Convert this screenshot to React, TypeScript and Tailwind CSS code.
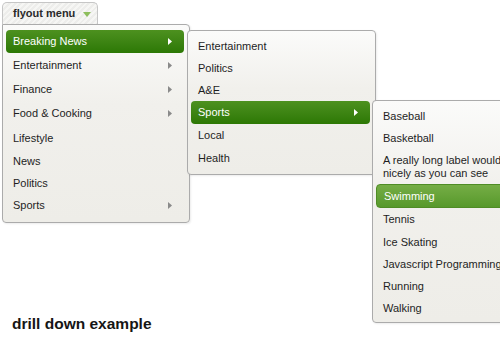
import React from "react";

type Item = {
  label: string;
  h: string;
  arrow?: boolean;
  active?: "dark" | "light";
};

const mainItems: Item[] = [
  { label: "Breaking News", h: "h-[23px]", arrow: true, active: "dark" },
  { label: "Entertainment", h: "h-[24px]", arrow: true },
  { label: "Finance", h: "h-[24px]", arrow: true },
  { label: "Food & Cooking", h: "h-[25px]", arrow: true },
  { label: "Lifestyle", h: "h-[24px]" },
  { label: "News", h: "h-[22px]" },
  { label: "Politics", h: "h-[22px]" },
  { label: "Sports", h: "h-[22px]", arrow: true },
];

const newsItems: Item[] = [
  { label: "Entertainment", h: "h-[22px]" },
  { label: "Politics", h: "h-[22px]" },
  { label: "A&E", h: "h-[22px]" },
  { label: "Sports", h: "h-[23px]", arrow: true, active: "dark" },
  { label: "Local", h: "h-[23px]" },
  { label: "Health", h: "h-[22px]" },
];

const sportsItems: Item[] = [
  { label: "Baseball", h: "h-[22px]" },
  { label: "Basketball", h: "h-[22px]" },
  { label: "A really long label would wrap nicely as you can see", h: "h-[35px]" },
  { label: "Swimming", h: "h-[24px]", active: "light" },
  { label: "Tennis", h: "h-[23px]" },
  { label: "Ice Skating", h: "h-[22px]" },
  { label: "Javascript Programming", h: "h-[22px]" },
  { label: "Running", h: "h-[22px]" },
  { label: "Walking", h: "h-[22px]" },
];

function Arrow({ white }: { white?: boolean }) {
  return (
    <svg width="4" height="7" viewBox="0 0 4 7" className="shrink-0">
      <polygon points="0,0 4,3.5 0,7" fill={white ? "#ffffff" : "#8a8a8a"} />
    </svg>
  );
}

function Row({ item }: { item: Item }) {
  const tone =
    item.active === "dark"
      ? "bg-linear-to-b from-[#4d911f] to-[#2c7804] text-white rounded-[4px]"
      : item.active === "light"
        ? "bg-linear-to-b from-[#75ad45] to-[#57992b] text-white rounded-[4px] border border-[#4f8c25]"
        : "text-[#1e1e1e]";

  return (
    <div
      className={`${item.h} ${tone} ml-[3px] mr-[5px] flex items-center justify-between pl-[7px] pr-[12px] text-[11px] leading-[13px]`}
    >
      <span className="w-[160px]">{item.label}</span>
      {item.arrow ? <Arrow white={!!item.active} /> : null}
    </div>
  );
}

function Menu({ items, className }: { items: Item[]; className: string }) {
  return (
    <div
      className={`absolute flex flex-col border border-[#ababab] bg-linear-to-b from-[#fbfbfa] via-[#f1f0ec] via-40% to-[#eeede8] shadow-[1px_1px_2px_rgba(0,0,0,0.08)] ${className}`}
    >
      {items.map((item) => (
        <Row key={item.label} item={item} />
      ))}
    </div>
  );
}

export default function App() {
  return (
    <div className="relative h-[360px] w-[500px] overflow-hidden bg-white font-['Liberation_Sans',Arial,sans-serif]">
      <div className="ml-[2px] mt-[2px] flex h-[22px] w-[96px] items-center justify-between rounded-t-[5px] border border-b-0 border-[#c6c6c6] bg-[repeating-linear-gradient(135deg,#ededeb_0px,#ededeb_2px,#f6f6f4_2px,#f6f6f4_4px)] pl-[10px] pr-[6px]">
        <span className="text-[11px] font-bold text-[#2a2a2a]">flyout menu</span>
        <svg width="8" height="5" viewBox="0 0 8 5" className="mt-[1px]">
          <polygon points="0,0 8,0 4,5" fill="#8dbe5c" />
        </svg>
      </div>

      <Menu
        items={mainItems}
        className="left-[2px] top-[24px] w-[188px] rounded-[4px] rounded-tl-none pt-[5px] pb-[6px]"
      />
      <Menu
        items={newsItems}
        className="left-[187px] top-[30px] w-[189px] rounded-[4px] pt-[4px] pb-[5px]"
      />
      <Menu
        items={sportsItems}
        className="left-[372px] top-[100px] w-[189px] rounded-[4px] pt-[4px] pb-[3px]"
      />

      <p className="ml-[12px] mt-[290px] text-[15.5px] font-bold leading-[20px] text-[#151515]">
        drill down example
      </p>
    </div>
  );
}
